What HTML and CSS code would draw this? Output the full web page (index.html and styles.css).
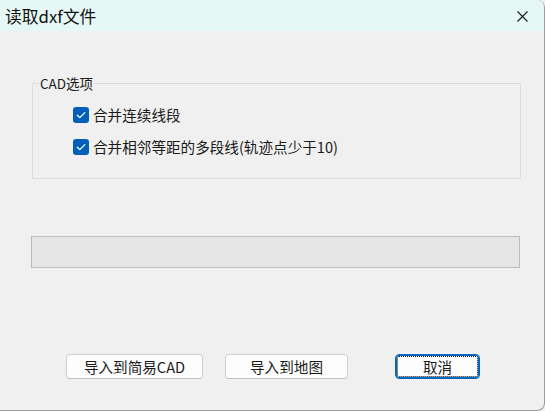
FILE: index.html
```html
<!DOCTYPE html>
<html lang="zh-CN">
<head>
<meta charset="utf-8">
<title>读取dxf文件</title>
<link rel="stylesheet" href="styles.css">
</head>
<body>
<div class="window">
  <div class="titlebar">
    <span class="title">读取dxf文件</span>
    <span class="close">
      <svg width="11" height="11" viewBox="0 0 11 11"><path d="M0.5 0.5 L10.5 10.5 M10.5 0.5 L0.5 10.5" stroke="#1a1a1a" stroke-width="1.1" fill="none"/></svg>
    </span>
  </div>
  <div class="content">
    <fieldset class="group">
      <legend class="legend">CAD选项</legend>
      <div class="options">
        <label class="check">
          <span class="box"><svg width="16" height="16" viewBox="0 0 16 16"><path d="M4.3 8.2 L6.8 10.6 L11.8 5.6" stroke="#fff" stroke-width="1.3" fill="none" stroke-linecap="round" stroke-linejoin="round"/></svg></span>
          <span class="label">合并连续线段</span>
        </label>
        <label class="check">
          <span class="box"><svg width="16" height="16" viewBox="0 0 16 16"><path d="M4.3 8.2 L6.8 10.6 L11.8 5.6" stroke="#fff" stroke-width="1.3" fill="none" stroke-linecap="round" stroke-linejoin="round"/></svg></span>
          <span class="label">合并相邻等距的多段线(轨迹点少于10)</span>
        </label>
      </div>
    </fieldset>
    <div class="progress"></div>
    <div class="buttons">
      <button class="btn btn-cad">导入到简易CAD</button>
      <button class="btn btn-map">导入到地图</button>
      <button class="btn btn-cancel">取消</button>
    </div>
  </div>
</div>
</body>
</html>
```
FILE: styles.css
```css
html, body {
  margin: 0;
  padding: 0;
  background: #f0f0f0;
}
body {
  width: 545px;
  height: 411px;
  overflow: hidden;
  font-family: "Noto Sans CJK SC", "Noto Sans", sans-serif;
  color: #1a1a1a;
}
.window {
  box-sizing: border-box;
  width: 545px;
  height: 411px;
  background: #f0f0f0;
  border-right: 1px solid #9c9c9c;
  border-bottom: 1px solid #9c9c9c;
  border-radius: 0 8px 8px 0;
  overflow: hidden;
}
.titlebar {
  height: 31px;
  background: #e5f8f5;
  display: flex;
  align-items: center;
  justify-content: space-between;
  padding-left: 5px;
  padding-right: 16px;
}
.title {
  font-size: 16.8px;
  line-height: 20px;
  color: #111;
  margin-top: 1px;
}
.close {
  display: flex;
  width: 11px;
  height: 11px;
  margin-top: 1px;
}
.content {
  display: flex;
  flex-direction: column;
  align-items: flex-start;
}
.group {
  box-sizing: border-box;
  margin: 44px 0 0 32px;
  width: 489px;
  height: 104px;
  border: 1px solid #dcdcdc;
  padding: 0;
}
.legend {
  font-size: 13.5px;
  line-height: 16px;
  padding: 0 2px 0 1px;
  margin-left: 6px;
  color: #1a1a1a;
}
.options {
  display: flex;
  flex-direction: column;
  gap: 16px;
  padding: 16px 0 0 40px;
}
.check {
  display: flex;
  align-items: center;
  height: 16px;
  gap: 4px;
}
.box {
  width: 16px;
  height: 16px;
  border-radius: 3px;
  background: #005fb8;
  display: flex;
}
.label {
  font-size: 14.6px;
  line-height: 16px;
  color: #1a1a1a;
}
.progress {
  box-sizing: border-box;
  margin: 57px 0 0 31px;
  width: 489px;
  height: 32px;
  border: 1px solid #bcbcbc;
  background: #e6e6e6;
}
.buttons {
  display: flex;
  margin: 86px 0 0 66px;
}
.btn {
  box-sizing: border-box;
  height: 25px;
  border: 1px solid #d0d0d0;
  border-bottom-color: #c2c2c2;
  border-radius: 4px;
  background: #fdfdfd;
  font-family: "Noto Sans CJK SC", "Noto Sans", sans-serif;
  font-size: 14.6px;
  line-height: 16px;
  color: #1a1a1a;
  padding: 0;
}
.btn-cad {
  width: 137px;
}
.btn-map {
  width: 123px;
  margin-left: 22px;
}
.btn-cancel {
  width: 85px;
  margin-left: 47px;
  border: 1px solid #0067c0;
  box-shadow: inset 0 0 0 1px #0067c0;
  outline: 1px dotted #111;
  outline-offset: -3px;
}
```
